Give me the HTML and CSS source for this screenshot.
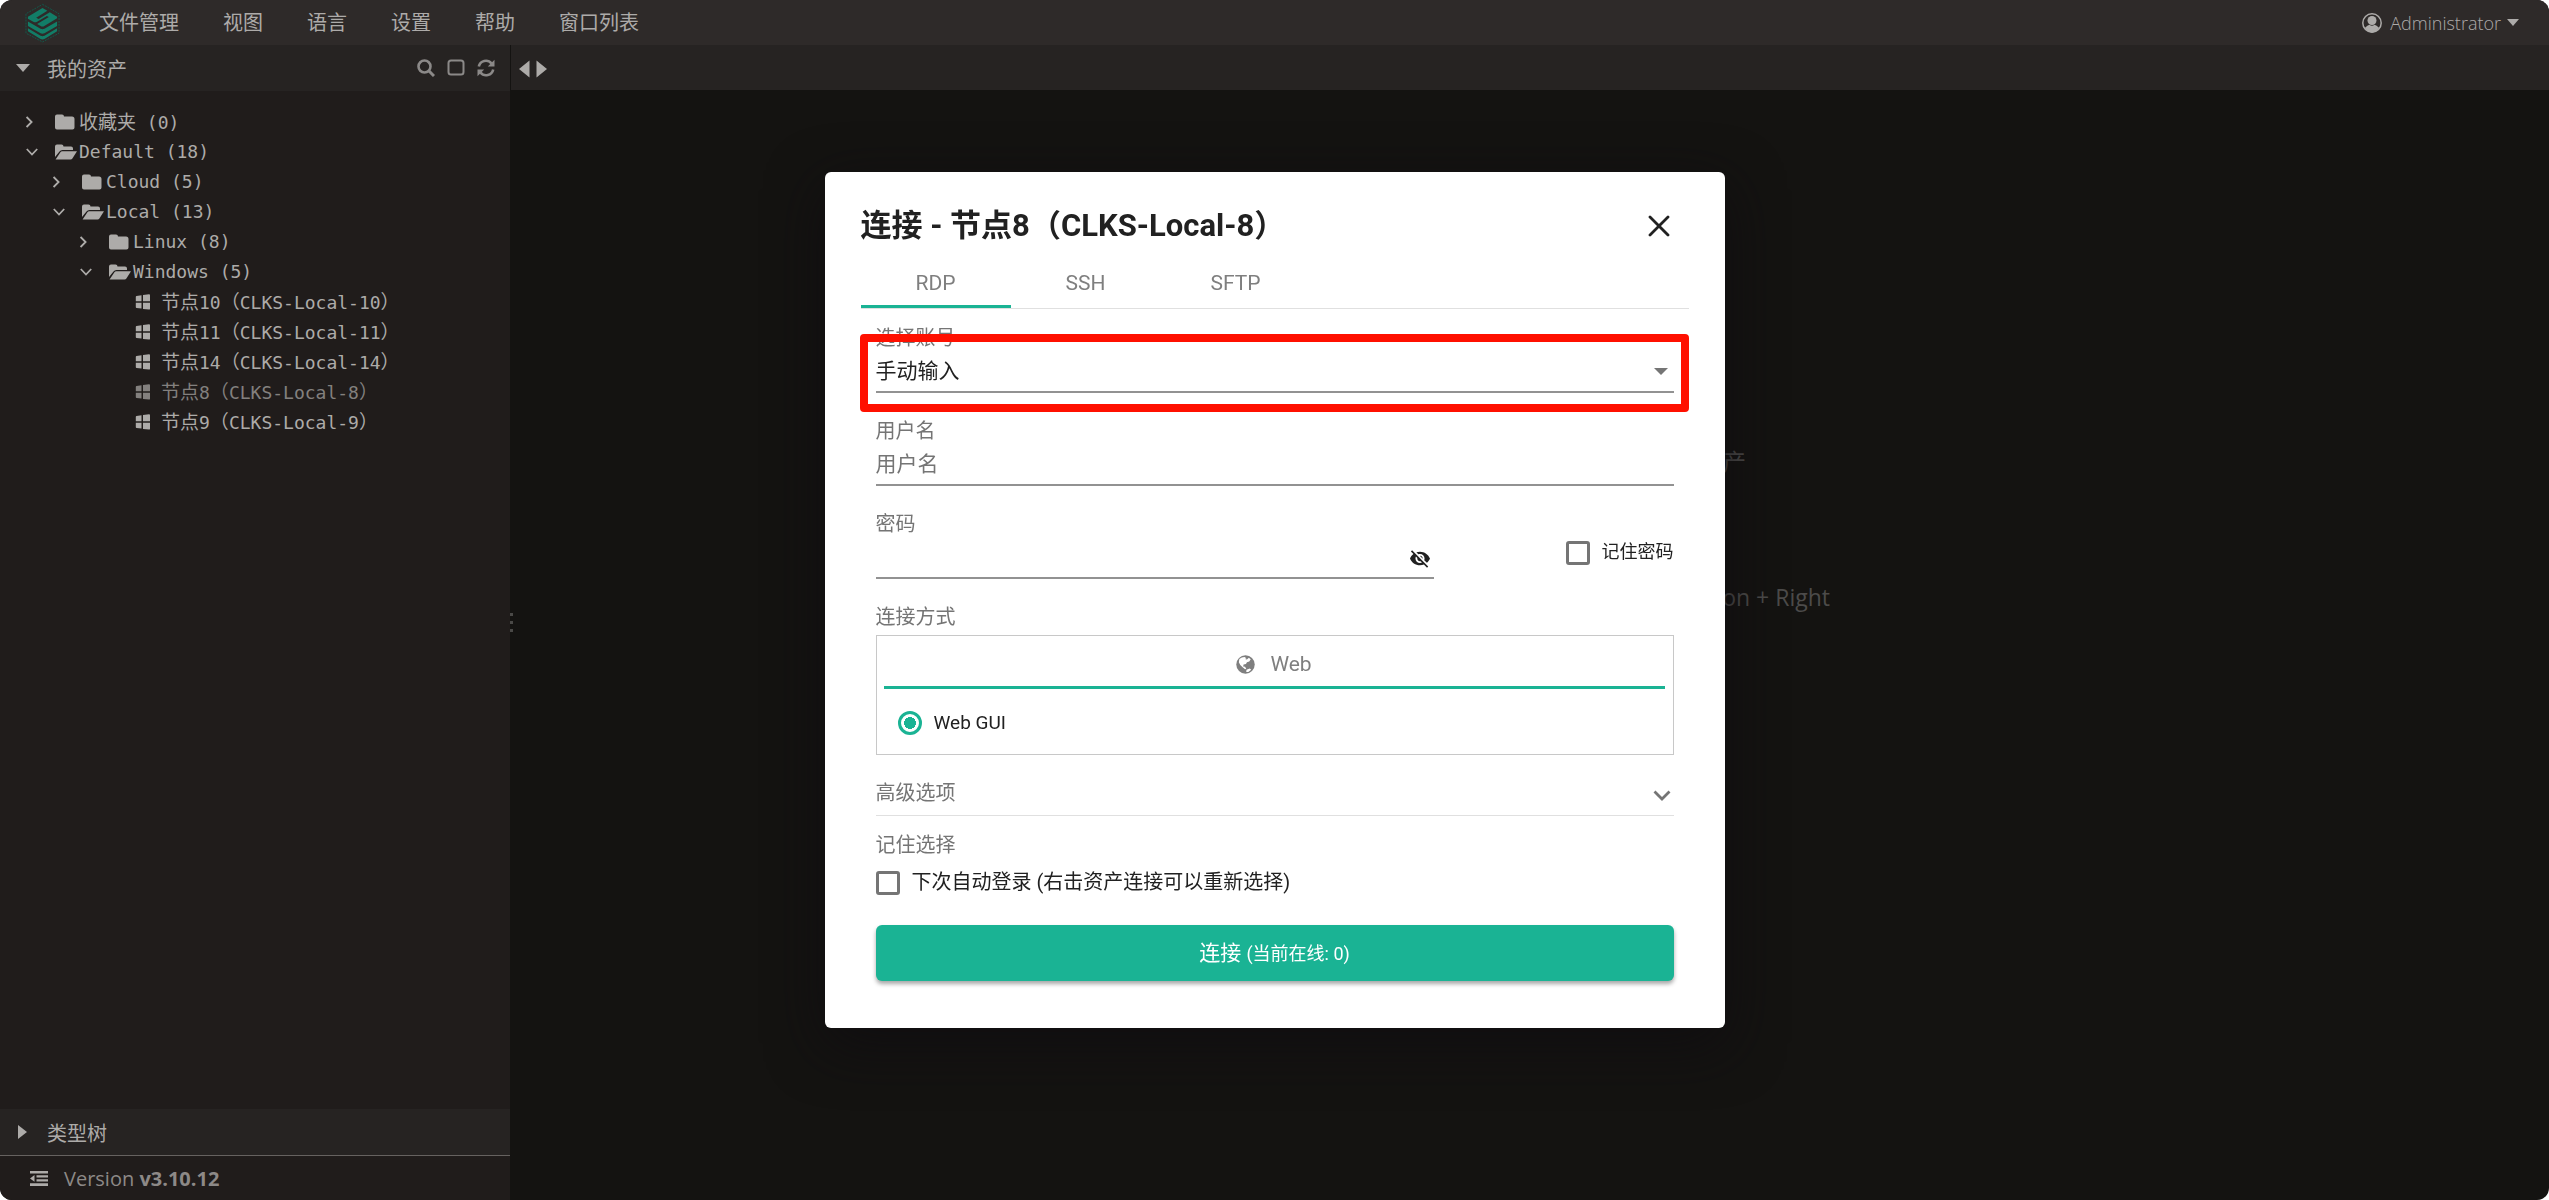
FILE: index.html
```html
<!DOCTYPE html>
<html lang="zh-CN">
<head>
<meta charset="utf-8">
<title>连接 - 节点8（CLKS-Local-8）</title>
<link rel="stylesheet" href="styles.css">
</head>
<body>
<svg class="symbols" aria-hidden="true">
  <symbol id="folder" viewBox="0 0 20 16"><path d="M0 2.500A2 2 0 0 1 2 .5h5a2 2 0 0 1 2 2h8a2.500 2.500 0 0 1 2.500 2.500v8.500a2 2 0 0 1-2 2H2a2 2 0 0 1-2-2z"/></symbol>
  <symbol id="folder-open" viewBox="0 0 22 16"><path d="M0 13V2.500A2 2 0 0 1 2 .5h4.500a2 2 0 0 1 2 2H16a2 2 0 0 1 2 2V6H7.500Q5.500 6 4.500 7.500z"/><path d="M.6 15.500 5.400 8.200Q6 7.300 7.200 7.300H22l-4.600 7.200q-.6 1-1.800 1z"/></symbol>
  <symbol id="windows" viewBox="0 0 16 16"><path d="M1.500 2 6.500 1.300V7.300H.8V3Q.8 2.200 1.500 2zM8 1.100 14 .3Q15 .2 15 1.200V7.300H8zM.8 8.700H6.500V14.600L1.600 14Q.8 13.900.8 13zM8 8.700H15V14.700Q15 15.700 14 15.600L8 14.900z"/></symbol>
  <symbol id="right" viewBox="0 0 12 12"><path d="M.6 1 5.600 6 .6 11" fill="none" stroke="currentColor" stroke-width="1.800"/></symbol>
  <symbol id="down" viewBox="0 0 12 12"><path d="M.8 3 6 8.500 11.200 3" fill="none" stroke="currentColor" stroke-width="1.800"/></symbol>
</svg>

<div class="app">
  <header class="topbar">
    <svg class="logo" viewBox="0 0 36 40" aria-label="JumpServer" role="img">
      <path class="logo-frame" d="M18 .8 35 10.500V30.500L18 39.500 1 30.500V10.500z"/>
      <path class="logo-band" d="M3 13.500 18 4.500 23 7.500 11.500 14.500 14 16 25.500 9 33 13.500V15L19 23.500H17L12.500 21 24.500 13.800 22.500 12.800 12 19Q10.500 19.600 9 19L3 15.500z"/>
      <path class="logo-band" d="M3 18.500 16 26Q18 27 20 26L33 18.500V23L20 30.500Q18 31.500 16 30.500L3 23z"/>
      <path class="logo-band" d="M3 25.500 16 33Q18 34 20 33L33 25.500V28.500L20 36.500Q18 37.500 16 36.500L3 28.500z"/>
    </svg>
    <nav class="menu">
      <a href="#">文件管理</a><a href="#">视图</a><a href="#">语言</a><a href="#">设置</a><a href="#">帮助</a><a href="#">窗口列表</a>
    </nav>
    <button class="user" type="button">
      <svg width="20" height="20" viewBox="0 0 20 20"><circle cx="10" cy="10" r="9.200" fill="none" stroke="currentColor" stroke-width="1.500"/><circle cx="10" cy="7.500" r="4.500"/><path d="M2.800 15Q5.500 12 7.500 11.800 10 13.500 12.500 11.800 14.500 12 17.200 15 14 19.500 10 19.500T2.800 15z"/></svg>
      <span>Administrator</span>
      <svg width="12" height="7" viewBox="0 0 12 7"><path d="M0 0H12L6 7z"/></svg>
    </button>
  </header>

  <div class="workspace">
    <aside class="sidebar">
      <div class="section">
        <svg class="twisty" viewBox="0 0 16 16"><path d="M0 4H14L7 12z"/></svg>
        <h2>我的资产</h2>
        <div class="tools">
          <button type="button" aria-label="搜索"><svg viewBox="0 0 18 18"><circle cx="7.500" cy="7.500" r="6" fill="none" stroke="currentColor" stroke-width="2.600"/><path d="m12 12 5 5" stroke="currentColor" stroke-width="3"/></svg></button>
          <button type="button" aria-label="多选"><svg viewBox="0 0 18 18"><rect x="1.500" y="1.500" width="15" height="14" rx="2.500" fill="none" stroke="currentColor" stroke-width="2"/></svg></button>
          <button type="button" aria-label="刷新"><svg viewBox="0 0 18 18"><path d="M1.800 7.500A7.200 7.200 0 0 1 14.500 4.500M16.200 10.500A7.200 7.200 0 0 1 3.500 13.500" fill="none" stroke="currentColor" stroke-width="2.600"/><path d="M17.500.8V7.500H10.800zM.5 17.200V10.500H7.200z"/></svg></button>
        </div>
      </div>

      <ul class="tree">
        <li class="l0"><svg class="arrow"><use href="#right"/></svg><svg class="folder closed"><use href="#folder"/></svg><span><span class="han">收藏夹</span> (0)</span></li>
        <li class="l0"><svg class="arrow"><use href="#down"/></svg><svg class="folder"><use href="#folder-open"/></svg><span>Default (18)</span></li>
        <li class="l1"><svg class="arrow"><use href="#right"/></svg><svg class="folder closed"><use href="#folder"/></svg><span>Cloud (5)</span></li>
        <li class="l1"><svg class="arrow"><use href="#down"/></svg><svg class="folder"><use href="#folder-open"/></svg><span>Local (13)</span></li>
        <li class="l2"><svg class="arrow"><use href="#right"/></svg><svg class="folder closed"><use href="#folder"/></svg><span>Linux (8)</span></li>
        <li class="l2"><svg class="arrow"><use href="#down"/></svg><svg class="folder"><use href="#folder-open"/></svg><span>Windows (5)</span></li>
        <li class="leaf"><svg class="os"><use href="#windows"/></svg><span><span class="han">节点</span>10<span class="han">（</span>CLKS-Local-10<span class="han">）</span></span></li>
        <li class="leaf"><svg class="os"><use href="#windows"/></svg><span><span class="han">节点</span>11<span class="han">（</span>CLKS-Local-11<span class="han">）</span></span></li>
        <li class="leaf"><svg class="os"><use href="#windows"/></svg><span><span class="han">节点</span>14<span class="han">（</span>CLKS-Local-14<span class="han">）</span></span></li>
        <li class="leaf active"><svg class="os"><use href="#windows"/></svg><span><span class="han">节点</span>8<span class="han">（</span>CLKS-Local-8<span class="han">）</span></span></li>
        <li class="leaf"><svg class="os"><use href="#windows"/></svg><span><span class="han">节点</span>9<span class="han">（</span>CLKS-Local-9<span class="han">）</span></span></li>
      </ul>

      <div class="section">
        <svg class="twisty" viewBox="0 0 16 16"><path d="M2 1 11 8 2 15z"/></svg>
        <h2>类型树</h2>
      </div>
      <footer class="version">
        <svg width="18" height="15" viewBox="0 0 18 15"><path d="M0 0H18V2.500H0zM6.500 4.200H18V6.500H6.500zM6.500 8.200H18V10.500H6.500zM0 12.300H18V15H0zM0 7.400 4.500 4V10.800z"/></svg>
        <span>Version <b>v3.10.12</b></span>
      </footer>
    </aside>

    <div class="splitter"><i></i><i></i><i></i></div>

    <main class="stage">
      <div class="tabstrip">
        <button type="button" aria-label="向左"><svg width="11" height="18" viewBox="0 0 11 18"><path d="M10.500.5V17.500L0 9z"/></svg></button>
        <button type="button" aria-label="向右"><svg width="11" height="18" viewBox="0 0 11 18"><path d="M.5.5V17.500L11 9z"/></svg></button>
      </div>
      <div class="hints">
        <p class="hint-asset">资产</p>
        <p class="hint-key">Option + Right</p>
      </div>
    </main>
  </div>
</div>

<div class="overlay">
  <form class="dialog" role="dialog" aria-labelledby="dialog-title">
    <div class="dialog-head">
      <h1 id="dialog-title">连接 - 节点8（CLKS-Local-8）</h1>
      <button class="close" type="button" aria-label="关闭"><svg width="22" height="22" viewBox="0 0 22 22"><path d="m2 2 18 18M20 2 2 20" stroke="currentColor" stroke-width="2.800" stroke-linecap="round"/></svg></button>
    </div>
    <div class="protocols" role="tablist">
      <button type="button" role="tab" aria-selected="true" class="selected">RDP</button>
      <button type="button" role="tab">SSH</button>
      <button type="button" role="tab">SFTP</button>
    </div>

    <div class="fields">
      <div class="field account">
        <label for="account">选择账号</label>
        <select id="account"><option>手动输入</option></select>
        <svg class="select-caret" viewBox="0 0 14 7"><path d="M0 0H14L7 7z"/></svg>
        <div class="highlight"></div>
      </div>
      <div class="field">
        <label for="username">用户名</label>
        <input id="username" type="text" placeholder="用户名">
      </div>
      <div class="password-row">
        <div class="field password">
          <label for="password">密码</label>
          <div class="secret">
            <input id="password" type="password">
            <button type="button" aria-label="显示密码"><svg width="20" height="18" viewBox="1 3 22 19"><path d="M12 7c2.760 0 5 2.240 5 5 0 .65-.13 1.260-.36 1.830l2.920 2.920c1.510-1.260 2.700-2.890 3.430-4.750-1.730-4.390-6-7.500-11-7.500-1.400 0-2.740.25-3.980.7l2.160 2.160C10.740 7.130 11.350 7 12 7zM2 4.270l2.280 2.280.46.46C3.080 8.300 1.780 10.020 1 12c1.730 4.390 6 7.500 11 7.500 1.550 0 3.030-.3 4.380-.84l.42.42L19.730 22 21 20.730 3.270 3 2 4.270zM7.530 9.800l1.550 1.550c-.05.21-.08.43-.08.65 0 1.660 1.340 3 3 3 .22 0 .44-.03.65-.08l1.550 1.550c-.67.33-1.410.53-2.200.53-2.760 0-5-2.240-5-5 0-.79.2-1.530.53-2.200zm4.310-.78l3.150 3.150.02-.16c0-1.660-1.340-3-3-3l-.17.01z"/></svg></button>
          </div>
        </div>
        <label class="check remember"><input type="checkbox"><span>记住密码</span></label>
      </div>

      <div class="field">
        <span class="caption">连接方式</span>
        <div class="method">
          <button class="method-tab" type="button" role="tab" aria-selected="true">
            <svg width="19" height="19" viewBox="0 0 20 20"><circle cx="10" cy="10" r="9.700"/><path fill="#fff" d="M3.500 4.300Q6 2 9 2L11 3.300 9.500 4.300 11.500 4.800 13.500 3 15.500 4.500 14 6.800 11.500 7.500 10.500 9.500 8 10 7.500 12 9.500 12.300 10.800 14.500 9.500 15 7 12.800 4.500 10.500 3 7.500zM11 15.500 14.500 14.300 16 15.500 13 18 10.800 17.800z"/></svg>
            <span>Web</span>
          </button>
          <label class="radio"><input type="radio" name="method" checked><span>Web GUI</span></label>
        </div>
      </div>

      <button class="advanced" type="button">
        <span>高级选项</span>
        <svg width="18" height="12" viewBox="0 0 18 12"><path d="M1.500 1.500 9 9 16.500 1.500" fill="none" stroke="currentColor" stroke-width="2.800"/></svg>
      </button>

      <span class="caption">记住选择</span>
      <label class="check auto-login"><input type="checkbox"><span>下次自动登录 (右击资产连接可以重新选择)</span></label>

      <button class="connect" type="submit">连接 <small>(当前在线: 0)</small></button>
    </div>
  </form>
</div>
</body>
</html>
```

FILE: styles.css
```css
* { box-sizing: border-box; }

body {
  margin: 0;
  background: #fff;
  font-family: "Open Sans", "Noto Sans CJK SC", sans-serif;
  font-size: 20px;
  font-weight: 400;
}

button, input, select {
  font: inherit;
  color: inherit;
  border: 0;
  padding: 0;
  background: none;
}

h1, h2, p, ul { margin: 0; padding: 0; font-weight: inherit; }
svg { display: block; flex: none; fill: currentColor; }
.symbols { position: absolute; width: 0; height: 0; }

/* application frame */
.app {
  display: flex;
  flex-direction: column;
  min-height: 100vh;
  overflow: hidden;
  border-radius: 12px;
  background: #141311;
  color: #adaba9;
}

.topbar {
  display: flex;
  align-items: center;
  height: 45px;
  padding: 0 30px 0 25px;
  background: #2e2a29;
}
.logo { width: 35px; height: 40px; }
.logo-frame { fill: none; stroke: #14594b; stroke-width: 1; stroke-dasharray: 2 1; }
.logo-band { fill: #127d67; }
.menu { display: flex; gap: 44px; margin-left: 39px; line-height: 30px; }
.menu a { color: inherit; text-decoration: none; }
.user { display: flex; align-items: center; gap: 6px; margin-left: auto; font-size: 18px; font-weight: 300; }
.user span { margin-left: 2px; }

.workspace { display: flex; flex: 1; }

/* sidebar */
.sidebar { display: flex; flex-direction: column; width: 510px; background: #201c1b; }
.section {
  display: flex;
  align-items: center;
  height: 46px;
  padding: 0 15px 0 16px;
  background: #262322;
}
.section h2 { margin-left: 15px; font-size: 20px; }
.twisty { width: 16px; height: 16px; }
.tools { display: flex; gap: 12px; margin-left: auto; color: #8b8988; }
.tools svg { width: 18px; height: 18px; }

.tree {
  flex: 1;
  padding: 16px 0;
  list-style: none;
  font-family: "DejaVu Sans Mono", "Noto Sans CJK SC", monospace;
  font-size: 18px;
  line-height: 30px;
}
.tree li { display: flex; align-items: center; height: 30px; white-space: pre; }
.han { font-family: "Noto Sans CJK SC", sans-serif; font-size: 19px; }
.l0 { padding-left: 26px; }
.l1 { padding-left: 53px; }
.l2 { padding-left: 80px; }
.leaf { padding-left: 135px; }
.arrow { width: 12px; height: 12px; margin-right: 17px; }
.folder { width: 22px; height: 16px; margin-right: 2px; }
.closed { width: 20px; margin-right: 4px; }
.os { width: 16px; height: 16px; margin-right: 10px; }
.active { opacity: .7; }

.version {
  display: flex;
  align-items: center;
  gap: 16px;
  height: 45px;
  padding-left: 30px;
  border-top: 1px solid #666260;
}
.version span { color: #8d8987; }

/* main stage */
.splitter {
  display: flex;
  flex-direction: column;
  justify-content: center;
  gap: 5px;
  width: 1px;
}
.splitter i { width: 3px; height: 3px; background: #4a4947; z-index: 1; }
.stage { display: flex; flex: 1; flex-direction: column; }
.tabstrip { display: flex; align-items: center; gap: 6px; height: 45px; padding: 2px 0 0 8px; background: #262322; }
.hints {
  display: flex;
  flex-direction: column;
  align-items: center;
  gap: 100px;
  padding-top: 353px;
  color: #4c4b4a;
  font-size: 23px;
  line-height: 36px;
  text-align: right;
}
.hint-asset { width: 432px; }
.hint-key { width: 600px; }

/* connection dialog */
.overlay {
  position: fixed;
  inset: 0;
  display: flex;
  align-items: center;
  justify-content: center;
}
.dialog {
  width: 900px;
  max-width: 90vw;
  padding: 29px 36px 47px;
  border-radius: 6px;
  background: #fff;
  box-shadow: 0 16px 56px rgba(15, 13, 16, .8);
  color: #212121;
  font-family: Roboto, "Noto Sans CJK SC", sans-serif;
}
.dialog-head { display: flex; align-items: center; justify-content: space-between; height: 48px; }
.dialog-head h1 { padding-bottom: 6px; font-size: 31px; font-weight: 700; }
.close { margin-right: 19px; padding-top: 2px; }

.protocols {
  display: flex;
  margin-top: 11px;
  border-bottom: 1px solid #e0e0e0;
}
.protocols button {
  width: 150px;
  height: 48px;
  border-bottom: 3px solid transparent;
  color: #7f7f7f;
  font-size: 21px;
}
.protocols .selected { border-color: #1ab394; }

.fields { padding: 16px 15px 0; }
.field { position: relative; margin-bottom: 25px; }
.field label, .caption { display: block; color: #757575; line-height: 26px; }
.field select, .field > input, .secret {
  display: block;
  width: 100%;
  height: 42px;
  border-bottom: 2px solid #929292;
  border-radius: 0;
  outline: 0;
  font-size: 21px;
  appearance: none;
}
.field input::placeholder { color: #757575; opacity: 1; }
.select-caret { position: absolute; right: 6px; bottom: 18px; width: 14px; height: 7px; color: #757575; }
.highlight {
  position: absolute;
  inset: 9px -15px -19px -16px;
  border: 8px solid #ff1000;
  border-radius: 4px;
  pointer-events: none;
}

.password-row { display: flex; align-items: flex-start; justify-content: space-between; }
.password { width: 70%; }
.field .secret { display: flex; align-items: center; }
.secret input { flex: 1; outline: 0; }
.secret button { margin-right: 4px; padding-top: 4px; }

.check, .radio { display: flex; align-items: center; gap: 12px; height: 24px; line-height: 24px; }
.check input, .radio input { width: 24px; height: 24px; margin: 0; appearance: none; }
.check input { border: 3px solid #757575; border-radius: 3px; }
.check span { padding-bottom: 2px; }
.remember { margin-top: 30px; font-size: 18px; }
.auto-login { margin-top: 13px; }

.method {
  margin-top: 5px;
  padding: 0 8px 19px 7px;
  border: 1px solid #c8c8c8;
}
.method-tab {
  display: flex;
  align-items: center;
  justify-content: center;
  gap: 15px;
  width: 100%;
  height: 53px;
  padding-top: 6px;
  border-bottom: 3px solid #1ab394;
  color: #7f7f7f;
  font-size: 21px;
}
.radio { margin: 22px 0 0 14px; }
.field .radio { display: flex; color: #212121; font-size: 19px; line-height: 24px; }
.radio input {
  border: 3px solid #1ab394;
  border-radius: 50%;
  background: radial-gradient(circle, #1ab394 6px, transparent 6px);
}

.advanced {
  display: flex;
  align-items: center;
  justify-content: space-between;
  width: 100%;
  height: 49px;
  margin: -13px 0 16px;
  padding-right: 3px;
  border-bottom: 1px solid #e0e0e0;
  color: #757575;
}
.advanced svg { margin-top: 10px; }

.connect {
  width: 100%;
  height: 56px;
  margin-top: 30px;
  padding-bottom: 4px;
  border-radius: 6px;
  background: #1ab394;
  box-shadow: 0 3px 4px rgba(0, 0, 0, .35);
  color: #fff;
  font-size: 21px;
}
.connect small { font-size: 18px; }
```
